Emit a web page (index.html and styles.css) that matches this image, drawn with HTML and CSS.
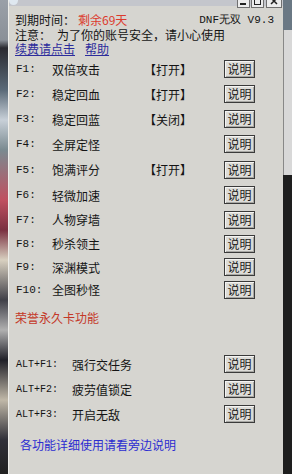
FILE: index.html
```html
<!DOCTYPE html>
<html lang="zh">
<head>
    <meta charset="UTF-8">
    <title>DNF无双</title>
    <link rel="stylesheet" href="styles.css">
</head>
<body>
    <div class="edge-left"></div>

    <div class="window">
        <!-- Titelleiste, nur unterer Rand sichtbar -->
        <div class="titlebar">
            <span class="app-icon"></span>
            <div class="caption-btns">
                <span class="cbtn"><svg width="11" height="11" viewBox="0 0 11 11"><rect x="2" y="7" width="6" height="2" fill="#222"/></svg></span>
                <span class="cbtn"><svg width="11" height="11" viewBox="0 0 11 11"><rect x="2.5" y="1.5" width="6" height="7" fill="none" stroke="#222"/></svg></span>
                <span class="cbtn close"><svg width="14" height="11" viewBox="0 0 14 11"><path d="M4 2 L10 8 M10 2 L4 8" stroke="#222" stroke-width="1.5"/></svg></span>
            </div>
        </div>

        <div class="head">
            <div class="line">
                <span class="lbl-time">到期时间：</span>
                <span class="remain">剩余69天</span>
                <span class="version">DNF无双 V9.3</span>
            </div>
            <div class="line">
                <span class="lbl-note">注意：</span>
                <span>为了你的账号安全，请小心使用</span>
            </div>
            <div class="line links">
                <a href="#">续费请点击</a>
                <a href="#">帮助</a>
            </div>
        </div>

        <!-- Funktionstasten F1 - F10 -->
        <div class="keys">
            <div class="row"><span class="key">F1:</span><span class="name">双倍攻击</span><span class="state">【打开】</span><button>说明</button></div>
            <div class="row"><span class="key">F2:</span><span class="name">稳定回血</span><span class="state">【打开】</span><button>说明</button></div>
            <div class="row"><span class="key">F3:</span><span class="name">稳定回蓝</span><span class="state">【关闭】</span><button>说明</button></div>
            <div class="row"><span class="key">F4:</span><span class="name">全屏定怪</span><span class="state"></span><button>说明</button></div>
            <div class="row"><span class="key">F5:</span><span class="name">饱满评分</span><span class="state">【打开】</span><button>说明</button></div>
            <div class="row"><span class="key">F6:</span><span class="name">轻微加速</span><span class="state"></span><button>说明</button></div>
            <div class="row"><span class="key">F7:</span><span class="name">人物穿墙</span><span class="state"></span><button>说明</button></div>
            <div class="row"><span class="key">F8:</span><span class="name">秒杀领主</span><span class="state"></span><button>说明</button></div>
            <div class="row"><span class="key">F9:</span><span class="name">深渊模式</span><span class="state"></span><button>说明</button></div>
            <div class="row"><span class="key">F10:</span><span class="name">全图秒怪</span><span class="state"></span><button>说明</button></div>
        </div>

        <div class="honor">荣誉永久卡功能</div>

        <div class="alt-keys">
            <div class="row alt"><span class="key">ALT+F1:</span><span class="name">强行交任务</span><button>说明</button></div>
            <div class="row alt"><span class="key">ALT+F2:</span><span class="name">疲劳值锁定</span><button>说明</button></div>
            <div class="row alt"><span class="key">ALT+F3:</span><span class="name">开启无敌</span><button>说明</button></div>
        </div>

        <div class="footer">各功能详细使用请看旁边说明</div>
    </div>

    <div class="edge-right">
        <div class="other-top"></div>
        <div class="other-mid"></div>
    </div>
</body>
</html>
```

FILE: styles.css
```css
body {
    margin: 0;
    width: 292px;
    height: 474px;
    display: flex;
    overflow: hidden;
    font-family: "Noto Sans CJK SC", "DejaVu Sans", sans-serif;
    font-size: 12px;
    color: #141414;
    background-color: #1c1c1c;
}
.edge-left {
    width: 8px;
    flex: none;
    background: linear-gradient(180deg, #9aa0a8 0px, #8a9098 40px, #2a2a30 48px, #5a6a78 90px, #c8d0d8 120px, #7a8a90 150px, #c05060 200px, #7a3040 230px, #d8d0c0 260px, #404048 300px, #b0b0b0 330px, #202028 360px, #c0b8a8 400px, #303038 440px, #202020 474px);
}
.window {
    width: 275px;
    flex: none;
    background-color: #d6d5d0;
    border-left: 1px solid #eeeeea;
    box-sizing: border-box;
    display: flex;
    flex-direction: column;
}
.titlebar {
    height: 6px;
    position: relative;
    background-color: #c4c6cc;
}
.app-icon {
    position: absolute;
    left: 0;
    top: -4px;
    width: 9px;
    height: 9px;
    border-radius: 50%;
    background-color: #dfe8f0;
}
.caption-btns {
    position: absolute;
    right: 1px;
    top: -5px;
    display: flex;
    gap: 1px;
}
.cbtn {
    height: 11px;
    border: 1px solid #707070;
    background-color: #ececec;
    display: flex;
}
.cbtn.close {
    margin-left: 1px;
}
.head {
    padding: 7px 0 0 6px;
}
.line {
    height: 14.5px;
    line-height: 14px;
    display: flex;
    align-items: center;
    white-space: nowrap;
}
.lbl-time {
    width: 63px;
}
.remain {
    color: #dc3a2c;
}
.version {
    margin-left: auto;
    margin-right: 9px;
    font-family: "Liberation Mono", monospace;
    font-size: 11px;
}
.lbl-note {
    width: 42px;
}
.links a {
    color: #2c2c9c;
    margin-right: 10px;
}
.keys {
    display: grid;
    grid-template-rows: 25px 25px 25px 25px 26px 25px 24px 24px 23px 22px;
}
.row {
    display: flex;
    align-items: center;
    padding-left: 7px;
    white-space: nowrap;
}
.key {
    width: 36px;
    font-family: "Liberation Mono", monospace;
    font-size: 11px;
}
.name {
    width: 96px;
}
.state {
    width: 76px;
    margin-left: -4px;
    margin-right: 4px;
}
button {
    width: 31px;
    height: 18px;
    padding: 0;
    border: 1px solid #3a3a3a;
    box-shadow: inset 1px 1px 0 #f4f4f2, inset -1px -1px 0 #a8a8a4;
    background-color: #dddcd8;
    font-family: "Noto Sans CJK SC", sans-serif;
    font-size: 12px;
    line-height: 14px;
    color: #1a1a1a;
}
.honor {
    margin-top: 10px;
    padding-left: 6px;
    color: #c43828;
    height: 14px;
    line-height: 14px;
}
.alt-keys {
    margin-top: 27px;
    display: grid;
    grid-template-rows: 25px 25px 25px;
}
.row.alt .key {
    width: 56px;
    font-size: 10px;
}
.row.alt .name {
    width: 152px;
}
.footer {
    margin-top: 11px;
    padding-left: 11px;
    color: #2c2cd0;
    line-height: 14px;
}
.edge-right {
    flex: 1;
    display: flex;
    flex-direction: column;
    background-color: #1e1e1e;
}
.other-top {
    height: 30px;
    background-color: #6a7884;
}
.other-mid {
    height: 145px;
    background-color: #d8d8d8;
    border-left: 1px solid #888;
}
```
